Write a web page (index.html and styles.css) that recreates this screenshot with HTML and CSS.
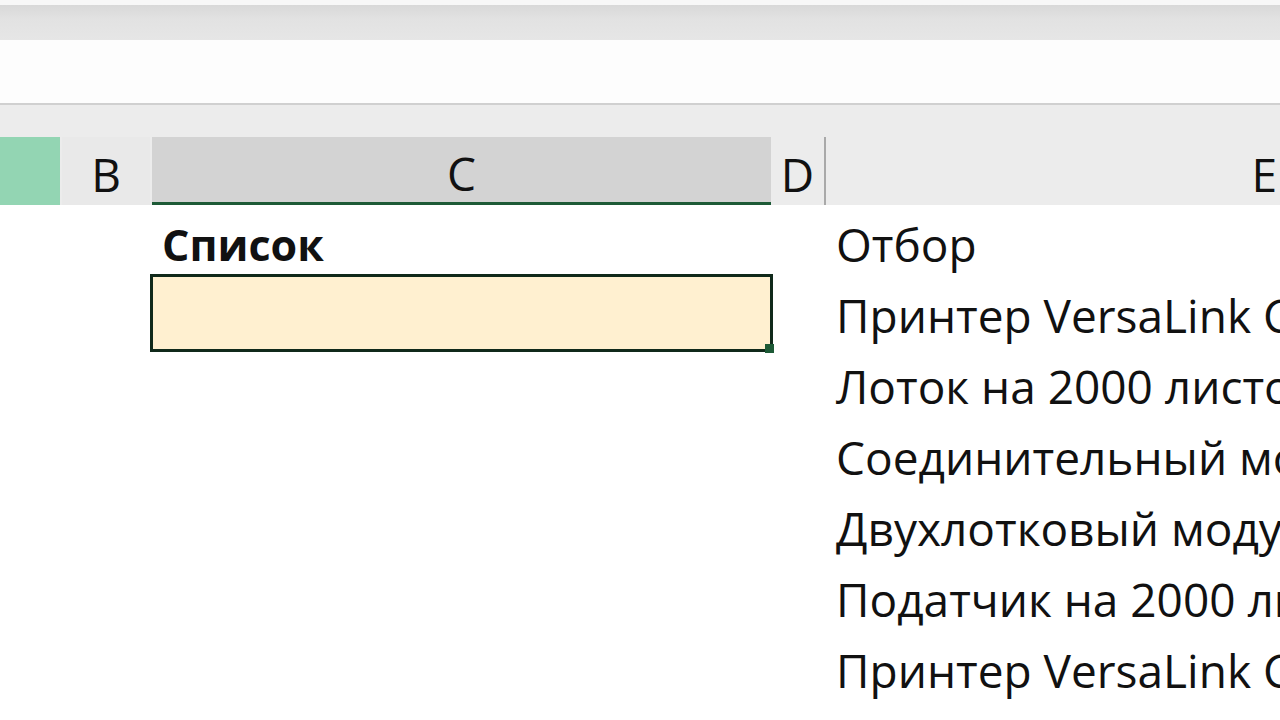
FILE: index.html
```html
<!DOCTYPE html>
<html lang="ru">
<head>
  <meta charset="UTF-8">
  <meta name="viewport" content="width=device-width, initial-scale=1.0">
  <title>Список</title>
  <link rel="stylesheet" href="styles.css">
</head>
<body>
  <div class="window">
    <div class="ribbon__edge"></div>
    <div class="formula__bar"></div>
    <div class="col__heads">
      <div class="col__head col__head_a"></div>
      <div class="col__head col__head_b">B</div>
      <div class="col__head col__head_c">C</div>
      <div class="col__head col__head_d">D</div>
      <div class="col__head col__head_e">E</div>
    </div>
    <div class="sheet">
      <div class="row">
        <div class="cell cell_a"></div>
        <div class="cell cell_b"></div>
        <div class="cell cell_c cell_bold">Список</div>
        <div class="cell cell_d"></div>
        <div class="cell cell_e">Отбор</div>
      </div>
      <div class="row">
        <div class="cell cell_a"></div>
        <div class="cell cell_b"></div>
        <div class="cell cell_c cell_active"><span class="fill__handle"></span></div>
        <div class="cell cell_d"></div>
        <div class="cell cell_e">Принтер VersaLink C9000</div>
      </div>
      <div class="row">
        <div class="cell cell_a"></div>
        <div class="cell cell_b"></div>
        <div class="cell cell_c"></div>
        <div class="cell cell_d"></div>
        <div class="cell cell_e">Лоток на 2000 листов</div>
      </div>
      <div class="row">
        <div class="cell cell_a"></div>
        <div class="cell cell_b"></div>
        <div class="cell cell_c"></div>
        <div class="cell cell_d"></div>
        <div class="cell cell_e">Соединительный модуль</div>
      </div>
      <div class="row">
        <div class="cell cell_a"></div>
        <div class="cell cell_b"></div>
        <div class="cell cell_c"></div>
        <div class="cell cell_d"></div>
        <div class="cell cell_e">Двухлотковый модуль</div>
      </div>
      <div class="row">
        <div class="cell cell_a"></div>
        <div class="cell cell_b"></div>
        <div class="cell cell_c"></div>
        <div class="cell cell_d"></div>
        <div class="cell cell_e">Податчик на 2000 листов</div>
      </div>
      <div class="row">
        <div class="cell cell_a"></div>
        <div class="cell cell_b"></div>
        <div class="cell cell_c"></div>
        <div class="cell cell_d"></div>
        <div class="cell cell_e">Принтер VersaLink C8000</div>
      </div>
    </div>
  </div>
</body>
</html>
```

FILE: styles.css
```css
body {
  margin: 0;
  background: #fff;
  font-family: "Open Sans", "Noto Sans", sans-serif;
  color: #111;
}

.window {
  width: 1280px;
  height: 720px;
  overflow: hidden;
}

.ribbon__edge {
  height: 35px;
  border-top: 5px solid #f7f7f7;
  background: linear-gradient(#d8d8d8, #e2e2e2 40%, #e6e6e6);
}

.formula__bar {
  height: 63px;
  background: #fdfdfd;
  border-bottom: 2px solid #d0d0d0;
}

.col__heads {
  display: flex;
  align-items: flex-end;
  height: 100px;
  background: #ececec;
}

.col__head {
  display: flex;
  justify-content: center;
  align-items: center;
  height: 68px;
  padding-top: 6px;
  font-size: 46px;
  line-height: 1;
  color: #111;
  box-sizing: border-box;
}

.col__head_a {
  width: 60px;
  margin-right: 2px;
  background: #93d5b3;
}

.col__head_b {
  width: 88px;
  margin-right: 2px;
  background: #e9e9e9;
}

.col__head_c {
  width: 619px;
  background: #d3d3d3;
  border-bottom: 3px solid #1d5a36;
}

.col__head_d {
  width: 55px;
  border-right: 2px solid #a9a9a9;
}

.col__head_e {
  flex: 1;
  justify-content: flex-end;
  padding-right: 3px;
}

.sheet {
  display: flex;
  flex-direction: column;
}

.row {
  display: grid;
  grid-template-columns: 60px 90px 623px 53px 1fr;
  height: 71px;
}

.cell {
  display: flex;
  align-items: flex-end;
  padding: 0 0 9px 10px;
  font-size: 46px;
  line-height: 1;
  white-space: nowrap;
  box-sizing: border-box;
}

.cell_c {
  padding-left: 12px;
}

.cell_bold {
  font-size: 43px;
  font-weight: 700;
  padding-bottom: 10px;
}

.cell_active {
  position: relative;
  margin: -2px 0 -5px 0;
  height: 78px;
  background: #fff0d0;
  border: 3px solid #10291a;
}

.fill__handle {
  position: absolute;
  right: -4px;
  bottom: -4px;
  width: 9px;
  height: 9px;
  background: #1d5a36;
}
```
